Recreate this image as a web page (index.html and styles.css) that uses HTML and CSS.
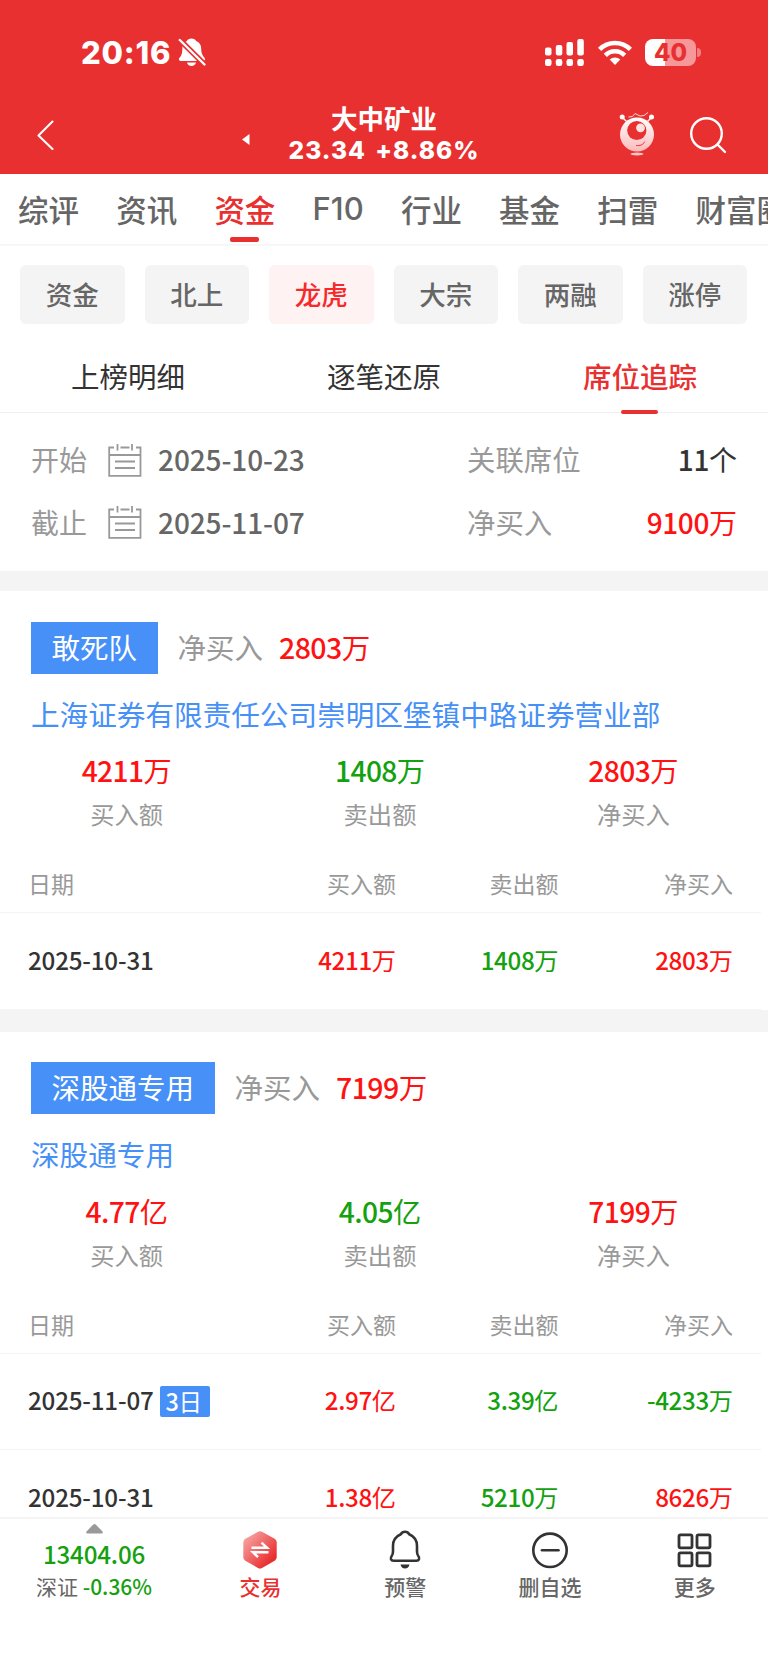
FILE: index.html
```html
<!DOCTYPE html>
<html lang="zh-CN">

	<head>
		<meta charset="UTF-8">
		<title>大中矿业</title>
		<link rel="stylesheet" href="styles.css">
	</head>

	<body>
		<div id="main">
			<header class="header">
				<div class="status">
					<div class="time">
						<span>20:16</span>
						<svg width="28" height="30" viewBox="0 0 28 30">
							<path fill="#fff" d="M13.500 1.500c2.200 0 4 1 4.700 2.500 3.300 1.200 5 4 5 7.500 0 5 1.300 6.800 3.300 9.300 1 1.200.5 3.200-1 3.200H2.500c-1.600 0-2.100-2-1-3.200C3.700 18.300 4.300 16.500 4.300 11.500c0-3.500 1.600-6.300 4.500-7.500.6-1.500 2.500-2.500 4.700-2.500zM9 25.500h9c-.5 2-2.200 3.500-4.500 3.500S9.500 27.500 9 25.500z" />
							<path stroke="#e93030" stroke-width="5.500" d="M0 1l28 28" />
							<path stroke="#fff" stroke-width="2.400" stroke-linecap="round" d="M1.800 3l24.700 24.500" />
						</svg>
					</div>
					<div class="signal">
						<svg class="cell" width="39" height="27" viewBox="0 0 39 27" fill="#fff">
							<rect x="0" y="8.500" width="6.500" height="8" rx="2" />
							<rect x="10.800" y="6" width="6.500" height="10.500" rx="2" />
							<rect x="21.500" y="3" width="6.500" height="13.500" rx="2" />
							<rect x="32.300" y="0" width="6.500" height="16.500" rx="2" />
							<rect x="0" y="20" width="6.500" height="7" rx="2.200" />
							<rect x="10.800" y="20" width="6.500" height="7" rx="2.200" />
							<rect x="21.500" y="20" width="6.500" height="7" rx="2.200" />
							<rect x="32.300" y="20" width="6.500" height="7" rx="2.200" />
						</svg>
						<svg class="wifi" width="34" height="25" viewBox="0 0 34 25">
							<g fill="none" stroke="#fff" stroke-width="4.600">
								<path d="M1.600 9.300a21.800 21.800 0 0 1 30.800 0" />
								<path d="M7.300 15.300a13.700 13.700 0 0 1 19.400 0" />
							</g>
							<path fill="#fff" d="M17 25l-5.300-5.400a7.500 7.500 0 0 1 10.600 0z" />
						</svg>
						<div class="battery"><span>40</span></div>
						<i class="cap"></i>
					</div>
				</div>
				<div class="nav">
					<svg class="back" width="18" height="32" viewBox="0 0 18 32" fill="none" stroke="#fff" stroke-width="2.100" stroke-linecap="round" stroke-linejoin="round">
						<path d="M15.500 2.500L1.500 16.500l14 13.500" />
					</svg>
					<svg class="prev" width="8" height="11" viewBox="0 0 8 11">
						<path fill="#fff" d="M0 5.500L7.500 0v11z" />
					</svg>
					<div class="stock">
						<h1>大中矿业</h1>
						<p>23.34 <span>+8.86%</span></p>
					</div>
					<svg class="robot" width="36" height="45" viewBox="0 0 36 45">
						<defs>
							<linearGradient id="face" x1="0" y1="0" x2="0" y2="1">
								<stop offset="0" stop-color="#fff" />
								<stop offset="1" stop-color="#fcb9ba" />
							</linearGradient>
						</defs>
						<g fill="none" stroke="#fff">
							<path d="M3.500 5.500l4 4M32.500 5.500l-4 4" stroke-width="1.300" />
							<path d="M9.500 5l4-.5 2.500-3 5 2.500 4-.5 4-3" stroke-width=".8" />
						</g>
						<circle cx="3.200" cy="5" r="2.500" fill="#fff" />
						<circle cx="32.500" cy="5" r="2.500" fill="#fff" />
						<circle cx="18" cy="22.500" r="17" fill="url(#face)" />
						<circle cx="17.800" cy="18.500" r="9.600" fill="#e93030" />
						<circle cx="21.500" cy="15.800" r="4.400" fill="#fde2e2" />
						<path d="M17.500 33.500c3.500.5 6.500-.5 8-3.500" fill="none" stroke="#e93030" stroke-width="1" stroke-linecap="round" />
						<ellipse cx="18" cy="42" rx="6.500" ry="1.500" fill="#fcc5c5" />
					</svg>
					<svg class="search" width="38" height="38" viewBox="0 0 38 38" fill="none" stroke="#fff" stroke-width="2.400" stroke-linecap="round">
						<circle cx="17.500" cy="17.500" r="15.300" />
						<path d="M28.500 28.500l7.500 7.500" />
					</svg>
				</div>
			</header>

			<nav class="tabs">
				<a>综评</a>
				<a>资讯</a>
				<a class="on">资金</a>
				<a class="en">F10</a>
				<a>行业</a>
				<a>基金</a>
				<a>扫雷</a>
				<a>财富圈</a>
			</nav>

			<div class="chips">
				<a>资金</a>
				<a>北上</a>
				<a class="on">龙虎</a>
				<a>大宗</a>
				<a>两融</a>
				<a>涨停</a>
			</div>

			<div class="subtabs">
				<a>上榜明细</a>
				<a>逐笔还原</a>
				<a class="on">席位追踪</a>
			</div>

			<div class="info">
				<div class="line">
					<span class="label">开始</span>
					<svg class="cal" width="34" height="33" viewBox="0 0 34 33" fill="none" stroke="#999" stroke-width="1.800">
						<path d="M6 3.500H1.200v28.300h31.300V3.500H28M12.500 3.500h9M9.500 0v6.500M24 0v6.500M1 11h32M7 17.500h20M7 24h20" />
					</svg>
					<span class="date">2025-10-23</span>
					<span class="label2">关联席位</span>
					<span class="val"><b>11</b>个</span>
				</div>
				<div class="line">
					<span class="label">截止</span>
					<svg class="cal" width="34" height="33" viewBox="0 0 34 33" fill="none" stroke="#999" stroke-width="1.800">
						<path d="M6 3.500H1.200v28.300h31.300V3.500H28M12.500 3.500h9M9.500 0v6.500M24 0v6.500M1 11h32M7 17.500h20M7 24h20" />
					</svg>
					<span class="date">2025-11-07</span>
					<span class="label2">净买入</span>
					<span class="val red"><b>9100</b>万</span>
				</div>
			</div>

			<section class="seat">
				<div class="seat-top">
					<span class="tag">敢死队</span>
					<span class="net">净买入</span>
					<span class="red"><b>2803</b>万</span>
				</div>
				<a class="name">上海证券有限责任公司崇明区堡镇中路证券营业部</a>
				<div class="sum">
					<div>
						<p class="red"><b>4211</b>万</p>
						<span>买入额</span>
					</div>
					<div>
						<p class="green"><b>1408</b>万</p>
						<span>卖出额</span>
					</div>
					<div>
						<p class="red"><b>2803</b>万</p>
						<span>净买入</span>
					</div>
				</div>
				<div class="table">
					<div class="tr th">
						<span>日期</span><span>买入额</span><span>卖出额</span><span>净买入</span>
					</div>
					<div class="tr">
						<span><b>2025-10-31</b></span>
						<span class="red"><b>4211</b>万</span>
						<span class="green"><b>1408</b>万</span>
						<span class="red"><b>2803</b>万</span>
					</div>
				</div>
			</section>

			<section class="seat">
				<div class="seat-top">
					<span class="tag">深股通专用</span>
					<span class="net">净买入</span>
					<span class="red"><b>7199</b>万</span>
				</div>
				<a class="name">深股通专用</a>
				<div class="sum">
					<div>
						<p class="red"><b>4.77</b>亿</p>
						<span>买入额</span>
					</div>
					<div>
						<p class="green"><b>4.05</b>亿</p>
						<span>卖出额</span>
					</div>
					<div>
						<p class="red"><b>7199</b>万</p>
						<span>净买入</span>
					</div>
				</div>
				<div class="table">
					<div class="tr th">
						<span>日期</span><span>买入额</span><span>卖出额</span><span>净买入</span>
					</div>
					<div class="tr">
						<span><b>2025-11-07</b><i class="days"><b>3</b>日</i></span>
						<span class="red"><b>2.97</b>亿</span>
						<span class="green"><b>3.39</b>亿</span>
						<span class="green"><b>-4233</b>万</span>
					</div>
					<div class="tr">
						<span><b>2025-10-31</b></span>
						<span class="red"><b>1.38</b>亿</span>
						<span class="green"><b>5210</b>万</span>
						<span class="red"><b>8626</b>万</span>
					</div>
				</div>
			</section>

			<footer class="bottom">
				<div class="index">
					<svg width="17" height="10" viewBox="0 0 17 10">
						<path fill="#999" d="M7.300.6q1.200-1 2.400 0L16.500 7.500q1 2-1 2H1.500q-2 0-1-2z" />
					</svg>
					<p class="green">13404.06</p>
					<div>深证 <span class="green">-0.36%</span></div>
				</div>
				<div class="item on">
					<svg width="38" height="40" viewBox="0 0 38 40">
						<defs>
							<linearGradient id="hex" x1="0" y1="0" x2="1" y2="1">
								<stop offset="0" stop-color="#f9b4b4" />
								<stop offset=".8" stop-color="#e93030" />
							</linearGradient>
						</defs>
						<path fill="url(#hex)" d="M17 1.800q2-1 4 0l12.700 7q2 1.200 2 3.500v15q0 2.300-2 3.500L21 38q-2 1-4 0L4.300 30.800q-2-1.200-2-3.500v-15q0-2.300 2-3.500z" />
						<path fill="none" stroke="#fff" stroke-width="2.500" d="M10.500 17.700H26l-5.500-5M27.500 22.200H12l5 5" />
					</svg>
					<span>交易</span>
				</div>
				<div class="item">
					<svg width="38" height="40" viewBox="0 0 38 40">
						<path fill="none" stroke="#333" stroke-width="2.600" stroke-linejoin="round" d="M19 1.800c2 0 3.400.9 4.200 2.500 4.600 2 7.800 6 7.800 11.700v5.500c0 2 .3 3.200 1.300 4.500 1.800 2.200.8 4.700-1.900 4.700H7.600c-2.700 0-3.700-2.500-1.900-4.700 1-1.300 1.300-2.500 1.300-4.500V16c0-5.700 3.200-9.700 7.800-11.700.8-1.600 2.200-2.500 4.200-2.500z" />
						<path fill="#333" d="M14.500 34.500h9c-.5 2.400-2.200 4-4.500 4s-4-1.600-4.500-4z" />
					</svg>
					<span>预警</span>
				</div>
				<div class="item">
					<svg width="38" height="40" viewBox="0 0 38 40" fill="none" stroke="#333" stroke-width="2.600" stroke-linecap="round">
						<circle cx="19" cy="20.300" r="16.700" />
						<path d="M11 20.300h16.500" />
					</svg>
					<span>删自选</span>
				</div>
				<div class="item">
					<svg width="38" height="40" viewBox="0 0 38 40" fill="none" stroke="#333" stroke-width="2.800">
						<rect x="3" y="4.800" width="13" height="13" rx="1.500" />
						<rect x="21" y="4.800" width="13" height="13" rx="1.500" />
						<rect x="3" y="22.800" width="13" height="13" rx="1.500" />
						<rect x="21" y="22.800" width="13" height="13" rx="1.500" />
					</svg>
					<span>更多</span>
				</div>
			</footer>
		</div>
	</body>

</html>
```

FILE: styles.css
```css
* {
	box-sizing: border-box;
}

body {
	margin: 0;
	background-color: #fff;
	font-family: "Noto Sans CJK SC", sans-serif;
	color: #333;
}

h1,
p {
	margin: 0;
}

b {
	font-weight: 500;
	letter-spacing: -.4px;
}

i {
	font-style: normal;
}

svg {
	display: block;
	flex: none;
}

.red {
	color: #fe1212;
}

.green {
	color: #14a10f;
}

#main {
	display: flex;
	flex-direction: column;
	width: 768px;
	height: 1665px;
	overflow: hidden;
}

/* 顶部 */
.header {
	flex: none;
	height: 174px;
	background-color: #e93030;
	color: #fff;
}

.status {
	display: flex;
	justify-content: space-between;
	align-items: center;
	height: 95px;
	padding: 9px 67px 0 81px;
}

.time {
	display: flex;
	align-items: center;
	gap: 7px;
	font: 800 31px/1 Inter, sans-serif;
	letter-spacing: .8px;
}

.signal {
	display: flex;
	align-items: center;
}

.wifi {
	margin: 0 13px 0 14px;
}

.battery {
	width: 51px;
	height: 27px;
	border-radius: 8px;
	background: linear-gradient(90deg, #fff 40%, #f69799 40%);
	color: #e93030;
	font: 800 24px/27px Inter, sans-serif;
	text-align: center;
}

.cap {
	width: 4px;
	height: 9px;
	margin-left: 1px;
	border-radius: 0 4px 4px 0;
	background-color: #f28083;
}

.nav {
	display: flex;
	align-items: center;
	height: 79px;
	padding: 0 40px 0 37px;
}

.prev {
	margin: 9px 37px 0 187px;
}

.stock {
	width: 194px;
	text-align: center;
	white-space: nowrap;
}

.stock>h1 {
	font: bold 26.5px/30px "Noto Sans CJK SC", sans-serif;
}

.stock>p {
	font: 800 24.5px/34px Inter, sans-serif;
	letter-spacing: 1px;
	word-spacing: 3px;
}

.robot {
	margin-left: 138px;
}

.search {
	margin-left: 34px;
}

/* 一级菜单 */
.tabs {
	display: flex;
	flex: none;
	gap: 37.200px;
	height: 72px;
	padding-left: 18px;
	border-bottom: 2px solid #f7f7f7;
	color: #666;
	font: 500 30.500px/70px "Noto Sans CJK SC", sans-serif;
	white-space: nowrap;
}

.tabs>a {
	position: relative;
}

.tabs>.en {
	font-family: Inter, sans-serif;
	font-size: 31px;
	font-weight: 500;
}

.on {
	color: #e93030;
}

.tabs>.on::after,
.subtabs>.on::after {
	content: "";
	position: absolute;
	left: 50%;
	bottom: 2px;
	width: 29px;
	height: 5px;
	margin-left: -15px;
	border-radius: 2px;
	background-color: #e93030;
}

.chips {
	display: grid;
	grid-template-columns: repeat(6, 1fr);
	flex: none;
	gap: 20px;
	padding: 19px 21px 0 20px;
}

.chips>a {
	height: 59px;
	border-radius: 6px;
	background-color: #f4f4f4;
	color: #666;
	font-size: 26.500px;
	font-weight: 500;
	line-height: 58px;
	text-align: center;
}

.chips>.on {
	background-color: #fff2f2;
	color: #f62a2a;
}

.subtabs {
	display: flex;
	flex: none;
	height: 89px;
	padding-top: 17px;
	border-bottom: 1px solid #f0f0f0;
	font-size: 28.500px;
	line-height: 70px;
	text-align: center;
}

.subtabs>a {
	position: relative;
	flex: 1;
}

.subtabs>.on {
	font-weight: 500;
}

.subtabs>.on::after {
	bottom: -2px;
	width: 37px;
	height: 4px;
	margin-left: -19px;
}

/* 起止日期 */
.info {
	flex: none;
	height: 178px;
	padding: 15px 31px 0 31px;
	border-bottom: 20px solid #f4f4f4;
	font-size: 28px;
}

.line {
	display: flex;
	align-items: center;
	height: 62.500px;
	line-height: 40px;
	white-space: nowrap;
}

.label,
.label2,
.net {
	color: #999;
}

.label2 {
	font-size: 28.400px;
}

.cal {
	margin: 2px 16px 0 21px;
}

.date {
	width: 309px;
	color: #666;
	font-weight: 500;
	letter-spacing: -.1px;
}

.val {
	margin-left: auto;
}

/* 席位 */
.seat {
	flex: none;
	border-bottom: 22px solid #f4f4f4;
}

.seat-top {
	display: flex;
	align-items: center;
	padding: 30.500px 31px 0;
	font-size: 28.500px;
	line-height: 50px;
}

.seat-top b,
.sum b {
	letter-spacing: -.6px;
}

.tag {
	padding: 0 20.500px 2px;
	background-color: #4690f8;
	color: #fff;
}

.net {
	margin: 0 16px 0 20px;
}

.net,
.net+span {
	padding-bottom: 2px;
}

.name {
	display: block;
	padding: 19px 31px 0;
	color: #4690f8;
	font-size: 28.620px;
	line-height: 42px;
	white-space: nowrap;
}

.sum {
	display: flex;
	width: 760px;
	padding-top: 12.500px;
	text-align: center;
}

.sum>div {
	flex: 1;
}

.sum p {
	font-size: 28.200px;
	line-height: 46px;
}

.sum span {
	display: block;
	color: #999;
	font-size: 24.300px;
	line-height: 42px;
}

.table {
	width: 761px;
	padding-top: 21px;
}

.tr {
	display: grid;
	grid-template-columns: 167px 201px 162.500px 174.500px;
	align-items: center;
	height: 96.500px;
	padding: 0 0 2px 28px;
	border-bottom: 1px solid #f4f4f4;
	font-size: 24.200px;
	line-height: 34px;
	text-align: right;
	white-space: nowrap;
}

.th {
	height: 57px;
	color: #999;
	font-size: 23px;
}

.tr>span:first-child {
	display: flex;
	align-items: center;
	text-align: left;
}

.tr>span:first-child>b {
	letter-spacing: -.2px;
}

.days {
	margin: 3px 0 0 6px;
	padding: 0 8px 0 6px;
	border-radius: 2px;
	background-color: #4690f8;
	color: #fff;
	font-size: 23.500px;
	line-height: 31px;
}

/* 底部菜单 */
.bottom {
	position: absolute;
	top: 1517px;
	left: 0;
	display: flex;
	width: 768px;
	height: 148px;
	border-top: 2px solid #f4f4f4;
	background-color: #fff;
	color: #666;
	font-size: 21px;
	font-weight: 500;
	text-align: center;
}

.index {
	width: 188px;
	padding-top: 5px;
	font-weight: 400;
}

.index>svg {
	margin: 0 auto;
}

.index>p {
	font-size: 24.200px;
	font-weight: 500;
	letter-spacing: -.2px;
	line-height: 40px;
}

.index>div {
	line-height: 24px;
}

.index span {
	font-weight: 500;
}

.item {
	width: 144.800px;
	padding-top: 11px;
}

.item>svg {
	margin: 0 auto;
}

.item>span {
	display: block;
	line-height: 33px;
}

.item.on {
	color: #e93030;
}
```
